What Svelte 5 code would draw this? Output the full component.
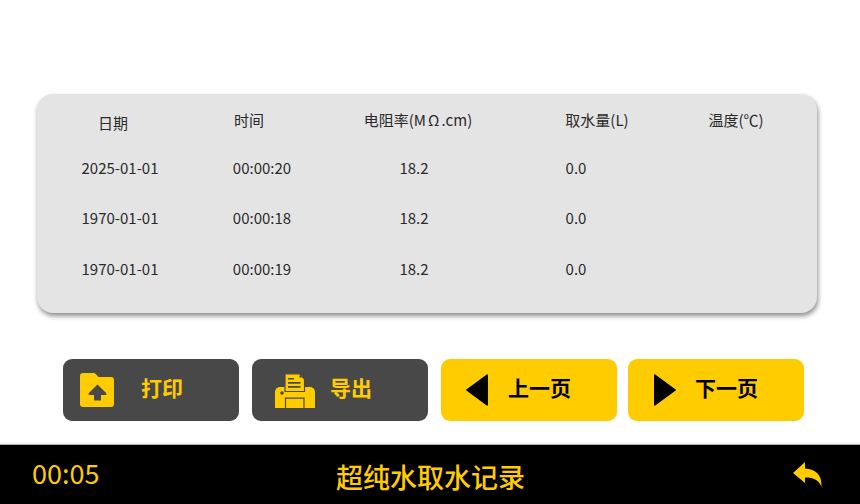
<script>
	const rows = [
		{ date: '2025-01-01', time: '00:00:20', res: '18.2', vol: '0.0' },
		{ date: '1970-01-01', time: '00:00:18', res: '18.2', vol: '0.0' },
		{ date: '1970-01-01', time: '00:00:19', res: '18.2', vol: '0.0' }
	]
</script>

<div class="screen">
	<main class="content">
		<section class="card">
			<div class="head">
				<span class="date-head">日期</span>
				<span>时间</span>
				<span>电阻率(M<span class="ohm">Ω</span>.cm)</span>
				<span>取水量(L)</span>
				<span>温度(℃)</span>
			</div>
			{#each rows as row}
				<div class="row">
					<span>{row.date}</span>
					<span>{row.time}</span>
					<span>{row.res}</span>
					<span>{row.vol}</span>
					<span></span>
				</div>
			{/each}
		</section>

		<div class="actions">
			<button class="btn dark" type="button">
				<svg class="folder" viewBox="0 0 34 34" aria-hidden="true">
					<path d="M3 0h10.500c.8 0 1.500.3 2 .8L18.500 4H31a3 3 0 0 1 3 3v24a3 3 0 0 1-3 3H3a3 3 0 0 1-3-3V3a3 3 0 0 1 3-3z" fill="#ffcc00" />
					<path d="M17.500 11.500l8.800 8.700c.6.600.2 1.800-.7 1.800H21v5.500h-7V22H9.400c-.9 0-1.300-1.200-.7-1.800z" fill="#484848" />
				</svg>
				<span class="label print-label">打印</span>
			</button>
			<button class="btn dark" type="button">
				<svg class="printer" viewBox="0 0 40 35" aria-hidden="true">
					<path d="M5 14h30a5 5 0 0 1 5 5v16H0V19a5 5 0 0 1 5-5z" fill="#ffcc00" />
					<path d="M10 .8h14.500L29.500 6v12.500H10z" fill="#ffcc00" stroke="#484848" stroke-width="1.200" />
					<path d="M13 5h6v1.500h-6zM13 9h12.500v1.800H13zM13 13h12.500v1.800H13z" fill="#484848" />
					<circle cx="25.500" cy="3.500" r="1.200" fill="#484848" />
					<circle cx="7" cy="20" r="1.800" fill="#484848" />
					<path d="M10.500 35V25.200h18.500V35" fill="#ffcc00" stroke="#484848" stroke-width="1.200" />
				</svg>
				<span class="label">导出</span>
			</button>
			<button class="btn yellow" type="button">
				<svg class="arrow" viewBox="0 0 22 32" aria-hidden="true">
					<path d="M21.200 1v30L.8 16z" fill="#000" stroke="#000" stroke-width="1.500" stroke-linejoin="round" />
				</svg>
				<span class="label">上一页</span>
			</button>
			<button class="btn yellow next" type="button">
				<svg class="arrow" viewBox="0 0 22 32" aria-hidden="true">
					<path d="M.8 1v30l20.400-15z" fill="#000" stroke="#000" stroke-width="1.500" stroke-linejoin="round" />
				</svg>
				<span class="label">下一页</span>
			</button>
		</div>
	</main>

	<footer class="bar">
		<span class="clock">00:05</span>
		<span class="title">超纯水取水记录</span>
		<svg class="back" viewBox="0 0 29 25" aria-hidden="true">
			<path d="M12 0v6.500C23 7 29 13 28.500 25 26 18 21 15.500 12 15.500V21L0 11z" fill="#ffcc00" />
		</svg>
	</footer>
</div>

<style>
	:global(body) {
		margin: 0;
		background: #fff;
	}
	.screen {
		display: flex;
		flex-direction: column;
		width: 860px;
		height: 504px;
		overflow: hidden;
		font-family: 'Noto Sans CJK SC', 'Noto Sans', sans-serif;
		color: #2a2a2a;
	}
	.content {
		flex: 1;
		padding: 94px 0 0 37px;
	}
	.card {
		box-sizing: border-box;
		width: 780px;
		height: 219px;
		padding-top: 1px;
		border-radius: 16px;
		background: #e4e4e4;
		box-shadow: 1px 3px 5px rgba(0, 0, 0, 0.45);
		font-size: 15px;
	}
	.head,
	.row {
		display: grid;
		align-items: center;
		text-align: center;
	}
	.head {
		grid-template-columns: 152px 120px 218px 140px 138px;
		height: 49px;
		margin-bottom: -2px;
	}
	.date-head {
		padding-top: 5px;
	}
	.ohm {
		margin: 0 2px;
	}
	.row {
		grid-template-columns: 166px 118px 186px 138px 1fr;
		height: 50.500px;
	}
	.actions {
		display: flex;
		gap: 13.500px;
		margin: 46px 0 0 26px;
	}
	.btn {
		display: flex;
		align-items: center;
		box-sizing: border-box;
		width: 175.500px;
		height: 62px;
		padding: 0 0 6px;
		border: 0;
		border-radius: 9px;
		font-family: inherit;
		cursor: pointer;
	}
	.btn svg {
		margin-top: 6px;
	}
	.btn.next {
		margin-left: -2px;
	}
	.dark {
		background: #484848;
		color: #ffcc00;
	}
	.yellow {
		background: #ffcc00;
		color: #000;
	}
	.label {
		font-size: 21px;
		font-weight: 700;
		line-height: 1;
	}
	.folder {
		width: 34px;
		height: 34px;
		margin: 0 27px 0 17px;
	}
	.printer {
		width: 40px;
		height: 35px;
		margin: 0 15px 0 23px;
	}
	.arrow {
		width: 22px;
		height: 32px;
		margin: 0 20px 0 25px;
	}
	.next .arrow {
		margin-right: 19px;
		margin-left: 26px;
	}
	.bar {
		display: flex;
		align-items: center;
		justify-content: space-between;
		box-sizing: border-box;
		height: 59px;
		padding: 0 38px 0 32px;
		background: #000;
		color: #ffcc00;
		box-shadow: 0 -1px 1px rgba(0, 0, 0, 0.3);
	}
	.clock {
		width: 304px;
		padding-bottom: 4px;
		font-size: 27px;
		line-height: 1;
	}
	.title {
		flex: 1;
		font-size: 27px;
		font-weight: 500;
		line-height: 1;
		padding-top: 4px;
	}
	.back {
		width: 29px;
		height: 25px;
		margin-bottom: 1px;
	}
</style>
